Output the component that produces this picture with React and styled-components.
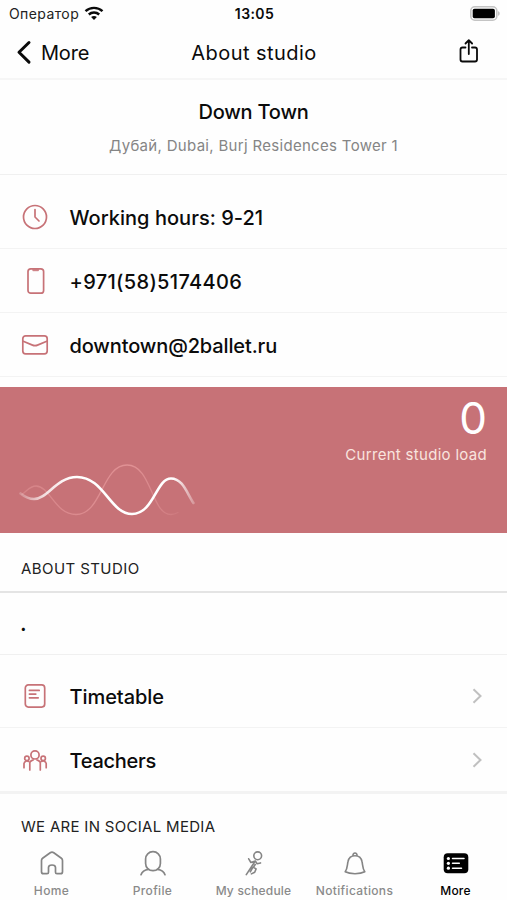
import React from "react";
import styled, { createGlobalStyle } from "styled-components";

const ROSE = "#c77277";

const Global = createGlobalStyle`
  * { box-sizing: border-box; }
  body { margin: 0; background: #fff; font-family: Inter, "Noto Sans", sans-serif; color: #0a0a0a; }
`;

const Screen = styled.div`
  width: 507px;
  height: 900px;
  overflow: hidden;
  display: flex;
  flex-direction: column;
  background: #fefefe;
`;

const Text = styled.span`
  display: inline-block;
  white-space: nowrap;
  font-size: ${(p) => p.$size}px;
  font-weight: ${(p) => p.$weight || 400};
  letter-spacing: ${(p) => p.$track || 0}px;
  color: ${(p) => p.$color || "#0b0b0b"};
  line-height: ${(p) => p.$line || 24}px;
`;

const Icon = styled.svg`
  display: block;
  flex: none;
  fill: none;
  stroke: ${(p) => p.$tint || "currentColor"};
  stroke-linecap: round;
  stroke-linejoin: round;
  overflow: visible;
`;

const StatusBar = styled.header`
  height: 27px;
  flex: none;
  display: grid;
  grid-template-columns: 1fr auto 1fr;
  align-items: center;
  padding: 0 7px 0 9px;
`;

const Carrier = styled.div`
  display: flex;
  align-items: center;
  gap: 5px;
`;

const BatterySlot = styled.div`
  justify-self: end;
`;

const NavBar = styled.nav`
  height: 53px;
  flex: none;
  display: grid;
  grid-template-columns: 1fr auto 1fr;
  align-items: center;
  padding: 0 28px 0 17px;
  border-bottom: 2px solid #f6f6f6;
`;

const Back = styled.div`
  display: flex;
  align-items: center;
  gap: 10px;
`;

const Share = styled.div`
  justify-self: end;
  padding-bottom: 3px;
`;

const Title = styled.div`
  padding-left: 12px;
`;

const StudioHead = styled.section`
  height: 95px;
  flex: none;
  display: flex;
  flex-direction: column;
  align-items: center;
  padding-top: 20px;
  gap: 10px;
  border-bottom: 1px solid #f0f0f0;
`;

const List = styled.section`
  flex: none;
  padding-top: ${(p) => p.$top}px;
`;

const Row = styled.div`
  height: ${(p) => 63 + (p.$rule || 1)}px;
  display: grid;
  grid-template-columns: 28px 1fr auto;
  column-gap: 20.5px;
  align-items: center;
  padding: 1px 25px 0 21px;
  border-bottom: ${(p) => p.$rule || 1}px solid #f3f3f3;
`;

const RowIcon = styled.div`
  display: flex;
  justify-content: center;
  color: ${ROSE};
`;

const RowLabel = styled.div`
  padding-top: 1px;
`;

const LoadCard = styled.section`
  height: 146px;
  flex: none;
  margin-top: 10px;
  background: ${ROSE};
  display: flex;
  justify-content: space-between;
  align-items: flex-end;
  padding: 0 20px 15px 19px;
`;

const LoadInfo = styled.div`
  align-self: flex-start;
  display: flex;
  flex-direction: column;
  align-items: flex-end;
  padding-top: 6px;
`;

const SectionHead = styled.div`
  flex: none;
  height: ${(p) => p.$height}px;
  padding: ${(p) => p.$top}px 21px 0;
  border-bottom: ${(p) => (p.$ruled ? "2px solid #e4e4e4" : "0")};
`;

const Description = styled.div`
  height: 62px;
  flex: none;
  padding: 18px 20px 0;
  border-bottom: 1px solid #f0f0f0;
`;

const TabBar = styled.footer`
  height: 55px;
  flex: none;
  display: grid;
  grid-template-columns: repeat(5, 100px);
  column-gap: 1px;
  padding-left: 1.5px;
`;

const Tab = styled.div`
  display: flex;
  flex-direction: column;
  align-items: center;
  padding-top: 5px;
  gap: 6px;
  color: ${(p) => (p.$active ? "#000" : "#858585")};
`;

function WifiIcon() {
  return (
    <Icon width="20" height="15" viewBox="0 0 20 15" strokeWidth="2.4">
      <path d="M1.500 5.200C6.300.7 13.700.7 18.500 5.200M4.800 8.500c2.900-2.700 7.500-2.700 10.400 0" strokeLinecap="butt" />
      <path d="M7.100 11.100c1.700-1.500 4.100-1.500 5.800 0L10 14Z" fill="currentColor" stroke="none" />
    </Icon>
  );
}

function BatteryIcon() {
  return (
    <Icon width="30" height="15" viewBox="0 0 30 15">
      <rect x=".8" y=".8" width="26" height="13.400" rx="4" stroke="#c4c4c4" strokeWidth="1.600" />
      <rect x="2.700" y="2.800" width="22.200" height="9.400" rx="1.800" fill="#000" stroke="none" />
      <path d="M28.300 5.200v4.500c1.600-.6 1.600-3.900 0-4.500Z" fill="#aaa" stroke="none" />
    </Icon>
  );
}

function ClockIcon() {
  return (
    <Icon width="26" height="26" viewBox="0 0 26 26" strokeWidth="1.700">
      <circle cx="13" cy="13" r="11.500" />
      <path d="M13 5.500V13l4 4" />
    </Icon>
  );
}

function PhoneIcon() {
  return (
    <Icon width="26" height="26" viewBox="0 0 26 26" strokeWidth="1.700">
      <rect x="6" y=".8" width="15.600" height="24.400" rx="2.800" />
      <path d="M10.700 1.600h6.200l-.5 1.200h-5.200Z" fill="currentColor" strokeWidth=".6" />
    </Icon>
  );
}

function MailIcon() {
  return (
    <Icon width="26" height="20" viewBox="0 0 26 20" strokeWidth="1.700">
      <rect x=".8" y=".9" width="24.400" height="18" rx="2.800" />
      <path d="m1.200 6.300 9.300 3.800q2.500 1 5 0l9.300-3.800" />
    </Icon>
  );
}

function TimetableIcon() {
  return (
    <Icon width="22" height="24" viewBox="0 0 22 24" strokeWidth="1.700">
      <rect x="1.300" y=".9" width="19.400" height="22.200" rx="3" />
      <path d="M5.400 6.400h9.800M5.400 10.100h6.400M5.400 13.800h8.800" />
    </Icon>
  );
}

function TeachersIcon() {
  return (
    <Icon width="26" height="24" viewBox="0 0 26 24" strokeWidth="1.700">
      <circle cx="13" cy="6.900" r="4.100" />
      <circle cx="4.900" cy="10.400" r="2.200" />
      <circle cx="21.200" cy="10.400" r="2.200" />
      <path d="M7.800 22v-7.200q0-1.400 1.800-2.200l1.500-.7M18.300 22v-7.200q0-1.400-1.800-2.200l-1.500-.7M4.200 12.900q-2.200 1-2.200 2.800v4M5 12.700l1.400.7M22 12.900q2.200 1 2.200 2.800v4M21 12.700l-1.400.7" />
    </Icon>
  );
}

function Chevron() {
  return (
    <Icon width="10" height="16" viewBox="0 0 10 16" $tint="#c0c0c0" strokeWidth="2">
      <path d="M1.500 1.300 8.500 8l-7 6.700" strokeLinecap="butt" strokeLinejoin="miter" />
    </Icon>
  );
}

function Waves() {
  return (
    <Icon width="178" height="56" viewBox="18 462 178 56">
      <defs>
        <linearGradient id="waveFade" gradientUnits="userSpaceOnUse" x1="19" y1="0" x2="195" y2="0">
          <stop offset="0" stopColor="#fff" stopOpacity=".2" />
          <stop offset=".13" stopColor="#fff" stopOpacity=".75" />
          <stop offset=".3" stopColor="#fff" />
          <stop offset=".87" stopColor="#fff" />
          <stop offset="1" stopColor="#fff" stopOpacity=".2" />
        </linearGradient>
        <linearGradient id="echoFade" gradientUnits="userSpaceOnUse" x1="20" y1="0" x2="178" y2="0">
          <stop offset="0" stopColor="#efa3a5" stopOpacity=".35" />
          <stop offset=".7" stopColor="#efa3a5" stopOpacity=".65" />
          <stop offset="1" stopColor="#efa3a5" stopOpacity=".15" />
        </linearGradient>
      </defs>
      <path d="M21 494.500C27 490 29 486 35 486c14 0 19 28.500 40 28.500C101 514.500 101 465 126 465c25 0 24 49.500 44 49.500 3 0 5-1 7-2" stroke="url(#echoFade)" strokeWidth="1.300" />
      <path d="M19.500 493.500C24 497 28 499 33 499 47 499 55 477 76 477c27 0 33 37 55 37s24-35.500 39-35.500c12 0 16 15 22.500 24.500" stroke="url(#waveFade)" strokeWidth="2.600" />
    </Icon>
  );
}

function HomeIcon() {
  return (
    <Icon width="26" height="26" viewBox="0 0 26 26" strokeWidth="1.700">
      <path d="M2.500 10.500q0-1.400 1.100-2.200l7.600-5.600q1.800-1.200 3.600 0l7.600 5.600q1.100.8 1.100 2.200v11.200q0 2-2 2H18q-1.500 0-1.500-1.500v-4.700q0-2.500-3.500-2.500t-3.500 2.500v4.700q0 1.500-1.500 1.500H4.500q-2 0-2-2Z" />
    </Icon>
  );
}

function ProfileIcon() {
  return (
    <Icon width="26" height="26" viewBox="0 0 26 26" strokeWidth="1.700">
      <rect x="5.600" y="1.700" width="14.800" height="19" rx="7.300" />
      <path d="M1 24.700q1.500-4.500 7.500-5.300M25 24.700q-1.500-4.500-7.500-5.300" />
    </Icon>
  );
}

function DancerIcon() {
  return (
    <Icon width="26" height="26" viewBox="0 0 26 26" strokeWidth="1.600">
      <circle cx="16.700" cy="5.800" r="3.900" />
      <path d="M7.700 8.800l2.200 3.700 4.400-1.500M14.300 11l-3.800 5.800-5.200 7.800M14.500 11.200l1.600 2.600 3.400-.9M14.200 14.500l-1.800 2.900 2.700 1.500-1.400 3.300-3.300 1.700M11.700 17.600l-2.400 4.200" />
    </Icon>
  );
}

function BellIcon() {
  return (
    <Icon width="26" height="26" viewBox="0 0 26 26" strokeWidth="1.600">
      <path d="M3.200 21.800C5.600 18.500 5.200 15 6 11.500 6.700 8 9.500 5.700 13 5.700s6.300 2.300 7 5.800c.8 3.500.4 7 2.800 10.300-4.800 2.500-14.800 2.500-19.600 0ZM11 5.800c-.6-3.800 4.600-3.800 4 0" />
    </Icon>
  );
}

function MoreIcon() {
  return (
    <Icon width="26" height="26" viewBox="0 0 26 26" strokeWidth="1.500">
      <rect x=".7" y="3.300" width="24.600" height="20" rx="4" fill="#000" stroke="none" />
      <path d="M9.500 8.500H21M9.500 13.300h6.800M9.500 18.200h9" stroke="#fff" />
      <g fill="#fff" stroke="none">
        <circle cx="5.400" cy="8.500" r="1.600" />
        <circle cx="5.400" cy="13.300" r="1.600" />
        <circle cx="5.400" cy="18.200" r="1.600" />
      </g>
    </Icon>
  );
}

const contacts = [
  { icon: ClockIcon, label: "Working hours: 9-21", track: 0.03 },
  { icon: PhoneIcon, label: "+971(58)5174406", track: 0.33 },
  { icon: MailIcon, label: "downtown@2ballet.ru", track: -0.13 },
];

const links = [
  { icon: TimetableIcon, label: "Timetable", rule: 1, track: -0.06 },
  { icon: TeachersIcon, label: "Teachers", rule: 3, track: -0.27 },
];

const tabs = [
  { icon: HomeIcon, label: "Home" },
  { icon: ProfileIcon, label: "Profile" },
  { icon: DancerIcon, label: "My schedule", track: 0.2 },
  { icon: BellIcon, label: "Notifications" },
  { icon: MoreIcon, label: "More", active: true, track: 0.2 },
];

export default function App() {
  return (
    <>
      <Global />
      <Screen>
        <StatusBar>
          <Carrier>
            <Text $size={14} $color="#222" $track={0.4}>Оператор</Text>
            <WifiIcon />
          </Carrier>
          <Text $size={14} $weight={600} $track={0.4}>13:05</Text>
          <BatterySlot><BatteryIcon /></BatterySlot>
        </StatusBar>
        <NavBar>
          <Back>
            <Icon width="14" height="24" viewBox="0 0 14 24" strokeWidth="3">
              <path d="M12 1.500 2 11.300l10 9.800" />
            </Icon>
            <Text $size={20} $track={-0.2}>More</Text>
          </Back>
          <Title><Text $size={20} $track={0.45}>About studio</Text></Title>
          <Share>
            <Icon width="20" height="24" viewBox="0 0 20 24" strokeWidth="1.800">
              <path d="M6.500 8.500h-3Q1.500 8.500 1.500 10.500v10q0 2 2 2h12.500q2 0 2-2v-10q0-2-2-2h-3M9.800 15V1.500M6.500 4.500l3.300-3.300 3.300 3.300" />
            </Icon>
          </Share>
        </NavBar>
        <StudioHead>
          <Text $size={20} $weight={500} $track={-0.2}>Down Town</Text>
          <Text $size={15} $color="#858585" $track={0.31}>Дубай, Dubai, Burj Residences Tower 1</Text>
        </StudioHead>
        <List $top={10}>
          {contacts.map(({ icon: Glyph, label, track }) => (
            <Row key={label}>
              <RowIcon><Glyph /></RowIcon>
              <RowLabel><Text $size={20} $weight={500} $track={track}>{label}</Text></RowLabel>
            </Row>
          ))}
        </List>
        <LoadCard>
          <Waves />
          <LoadInfo>
            <Text $size={44} $weight={400} $color="#fff" $line={50}>0</Text>
            <Text $size={15} $color="#f9e4df" $track={0.3}>Current studio load</Text>
          </LoadInfo>
        </LoadCard>
        <SectionHead $height={60} $top={24} $ruled>
          <Text $size={15} $color="#222" $track={0.42}>ABOUT STUDIO</Text>
        </SectionHead>
        <Description><Text $size={22} $weight={500}>.</Text></Description>
        <List $top={9}>
          {links.map(({ icon: Glyph, label, rule, track }) => (
            <Row key={label} $rule={rule}>
              <RowIcon><Glyph /></RowIcon>
              <RowLabel><Text $size={20} $weight={500} $track={track}>{label}</Text></RowLabel>
              <Chevron />
            </Row>
          ))}
        </List>
        <SectionHead $height={51} $top={21}>
          <Text $size={15} $color="#222" $track={0.3}>WE ARE IN SOCIAL MEDIA</Text>
        </SectionHead>
        <TabBar>
          {tabs.map(({ icon: Glyph, label, active, track = 0.35 }) => (
            <Tab key={label} $active={active}>
              <Glyph />
              <Text $size={12} $line={18} $weight={500} $track={track} $color={active ? "#000" : "#8a8a8a"}>{label}</Text>
            </Tab>
          ))}
        </TabBar>
      </Screen>
    </>
  );
}
